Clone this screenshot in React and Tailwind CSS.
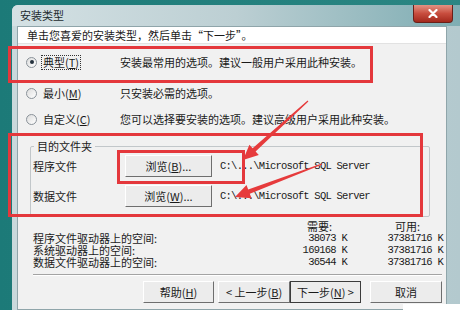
import React from "react";

// arrow polygon: tapered shaft + head, points toward (tx,ty)
const arrowPoints = (sx, sy, tx, ty, head = 15, half = 7) => {
  const dx = tx - sx;
  const dy = ty - sy;
  const len = Math.hypot(dx, dy);
  const ux = dx / len;
  const uy = dy / len;
  const nx = -uy;
  const ny = ux;
  const bx = tx - ux * head;
  const by = ty - uy * head;
  const pts = [
    [sx + nx * 0.6, sy + ny * 0.6],
    [bx + nx * 2.2, by + ny * 2.2],
    [bx + nx * half, by + ny * half],
    [tx, ty],
    [bx - nx * half, by - ny * half],
    [bx - nx * 2.2, by - ny * 2.2],
    [sx - nx * 0.6, sy - ny * 0.6],
  ];
  return pts.map(([x, y]) => `${x.toFixed(1)},${y.toFixed(1)}`).join(" ");
};

const Radio = ({ checked }) => (
  <span className="flex h-[11px] w-[11px] shrink-0 items-center justify-center rounded-full border border-[#8a9299] bg-gradient-to-br from-[#dcdcdc] to-white">
    {checked && <span className="h-[4px] w-[4px] rounded-full bg-[#24313d]" />}
  </span>
);

const Btn = ({ className, children, primary }) => (
  <div
    className={`flex h-[22px] items-center justify-center bg-[#ececec] ${
      primary ? "border border-[#3c3c3c]" : "border border-t-white border-l-white border-r-[#6e6e6e] border-b-[#6e6e6e]"
    } ${className}`}
  >
    {children}
  </div>
);

const radios = [
  { label: "典型", key: "T", desc: "安装最常用的选项。建议一般用户采用此种安装。", checked: true, mt: "mt-[7px]" },
  { label: "最小", key: "M", desc: "只安装必需的选项。", mt: "mt-[9px]" },
  { label: "自定义", key: "C", desc: "您可以选择要安装的选项。建议高级用户采用此种安装。", mt: "mt-[4px]" },
];

const space = [
  { label: "程序文件驱动器上的空间:", need: "38073 K", avail: "37381716 K" },
  { label: "系统驱动器上的空间:", need: "169168 K", avail: "37381716 K" },
  { label: "数据文件驱动器上的空间:", need: "36544 K", avail: "37381716 K" },
];

const mono = "font-['Liberation_Mono',monospace] text-[10.5px] tracking-[-0.75px]";

export default function App() {
  return (
    <div className="relative h-[310px] w-[460px] overflow-hidden bg-gradient-to-r from-[#1c7a78] to-[#2b8683] pl-[12px] pt-[5px] font-['Noto_Sans_CJK_SC',sans-serif] text-[11px] leading-none text-[#1a1a1a]">
      {/* window */}
      <div className="flex h-[305px] w-[448px] flex-col rounded-tl-[6px] bg-gradient-to-r from-[#c9d9dc] to-[#b3c9ce]">
        {/* title bar */}
        <div className="flex h-[21px] items-start justify-between rounded-tl-[6px] bg-gradient-to-r from-[#d4e1e4] via-[#bccfd3] to-[#7eadb3]">
          <span className="ml-[8px] mt-[5px] text-[#1d2b2e]">安装类型</span>
          <div className="mr-[7px] flex h-[18px] w-[40px] items-center justify-center rounded-b-[4px] border border-t-0 border-[#6a2019] bg-gradient-to-b from-[#e39284] via-[#c84d3e] to-[#a3281c]">
            <svg width="10" height="9" viewBox="0 0 10 9">
              <path d="M1.5 1 L8.5 8 M8.5 1 L1.5 8" stroke="#fff" strokeWidth="2.2" strokeLinecap="round" />
            </svg>
          </div>
        </div>

        <div className="flex flex-1">
          {/* content panel */}
          <div className="ml-[5px] flex w-[430px] flex-col border border-[#8fa5aa] bg-[#f1f1f1]">
            <div className="flex h-[17px] items-center border-b border-[#e2e2e2] bg-white pl-[9px]">
              单击您喜爱的安装类型，然后单击“下一步”。
            </div>

            {radios.map((r) => (
              <div key={r.key} className={`flex h-[22px] items-center pl-[8px] ${r.mt}`}>
                <div className="flex w-[94px] items-center gap-[6px]">
                  <Radio checked={r.checked} />
                  <span className={r.checked ? "outline outline-1 outline-dotted outline-[#333] outline-offset-[1px]" : ""}>
                    {r.label}(<span className="underline">{r.key}</span>)
                  </span>
                </div>
                <span>{r.desc}</span>
              </div>
            ))}

            {/* destination folder group */}
            <fieldset className="ml-[12px] mt-[9px] w-[400px] rounded-[2px] border border-[#c2c7ca] pb-[9px] pl-[2px]">
              <legend className="ml-[1px] px-[3px] leading-[14px]">目的文件夹</legend>
              <div className="mt-[2px] flex items-center">
                <span className="w-[92px]">程序文件</span>
                <Btn className="w-[87px]">浏览(<span className="underline">B</span>)...</Btn>
                <span className={`ml-[8px] ${mono}`}>{"C:\\...\\Microsoft SQL Server"}</span>
              </div>
              <div className="mt-[8px] flex items-center">
                <span className="w-[92px]">数据文件</span>
                <Btn className="w-[87px]">浏览(<span className="underline">W</span>)...</Btn>
                <span className={`ml-[8px] ${mono}`}>{"C:\\...\\Microsoft SQL Server"}</span>
              </div>
            </fieldset>

            {/* disk space */}
            <div className="mt-[3px] grid grid-cols-[267px_47px_96px] pl-[15px] leading-[12px]">
              <span />
              <span className="pl-[7px]">需要:</span>
              <span className="pl-[48px]">可用:</span>
              {space.map((s) => (
                <React.Fragment key={s.label}>
                  <span>{s.label}</span>
                  <span className={`text-right ${mono}`}>{s.need}</span>
                  <span className={`text-right ${mono}`}>{s.avail}</span>
                </React.Fragment>
              ))}
            </div>

            <div className="ml-[15px] mt-[6px] w-[409px] border-b border-t border-b-white border-t-[#a3a3a3]" />

            <div className="mt-[5px] flex">
              <Btn className="ml-[125px] w-[71px]">帮助(<span className="underline">H</span>)</Btn>
              <Btn className="ml-[4px] w-[72px]">&lt; 上一步(<span className="underline">B</span>)</Btn>
              <Btn className="w-[71px]" primary>下一步(<span className="underline">N</span>) &gt;</Btn>
              <Btn className="ml-[9px] w-[72px]">取消</Btn>
            </div>
          </div>
        </div>
      </div>

      {/* annotation overlays */}
      <div className="pointer-events-none absolute left-[8px] top-[46px] h-[37px] w-[365px] border-[3px] border-[#e4383c]" />
      <div className="pointer-events-none absolute left-[8px] top-[133px] h-[84px] w-[415px] border-[3px] border-[#e4383c]" />
      <div className="pointer-events-none absolute left-[117px] top-[150px] h-[34px] w-[128px] border-[3px] border-[#e4383c]" />
      <svg className="pointer-events-none absolute left-0 top-0" width="460" height="310">
        <polygon points={arrowPoints(308, 101, 243, 160)} fill="#e63b3c" />
        <polygon points={arrowPoints(322, 164, 235, 197)} fill="#e63b3c" />
      </svg>
      <div className="absolute left-[403px] top-[304px] h-[6px] w-[57px] bg-white" />
    </div>
  );
}
